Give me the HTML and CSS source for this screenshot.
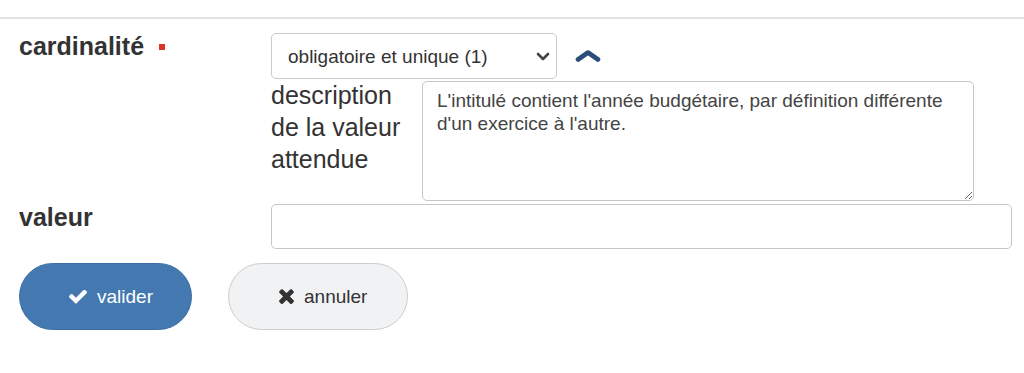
FILE: index.html
```html
<!DOCTYPE html>
<html lang="fr">
<head>
<meta charset="utf-8">
<title>cardinalité</title>
<link rel="stylesheet" href="styles.css">
</head>
<body>
<div class="topline"></div>
<form class="form">
  <div class="row">
    <div class="label">cardinalité<span class="required"></span></div>
    <div class="field">
      <div class="select-line">
        <div class="select-wrap">
          <select class="select">
            <option>obligatoire et unique (1)</option>
          </select>
          <svg class="select-arrow" width="14" height="9" viewBox="0 0 14 9"><polyline points="2,2 7,7 12,2" fill="none" stroke="#444" stroke-width="2.6" stroke-linecap="round" stroke-linejoin="round"/></svg>
        </div>
        <svg class="up" width="26" height="12" viewBox="0 0 26 12"><polyline points="3,9.5 13,2.5 23,9.5" fill="none" stroke="#2c4f77" stroke-width="4.6" stroke-linecap="round" stroke-linejoin="round"/></svg>
      </div>
      <div class="desc">
        <div class="desc-label">description de la valeur attendue</div>
        <textarea class="textarea">L'intitulé contient l'année budgétaire, par définition différente d'un exercice à l'autre.</textarea>
      </div>
    </div>
  </div>
  <div class="row row-valeur">
    <div class="label">valeur</div>
    <div class="field">
      <input class="input" type="text">
    </div>
  </div>
  <div class="buttons">
    <button type="button" class="btn btn-primary">
      <svg class="ico" width="18" height="14" viewBox="121 402 1550 1120"><path fill="#fff" d="M1671 566q0 40-28 68l-724 724-136 136q-28 28-68 28t-68-28l-136-136-362-362q-28-28-28-68t28-68l136-136q28-28 68-28t68 28l294 295 656-657q28-28 68-28t68 28l136 136q28 28 28 68z"/></svg>
      <span>valider</span>
    </button>
    <button type="button" class="btn btn-default">
      <svg class="ico" width="15" height="15" viewBox="110 360 1188 1194"><path fill="#333" d="M1298 1322q0 40-28 68l-136 136q-28 28-68 28t-68-28l-294-294-294 294q-28 28-68 28t-68-28l-136-136q-28-28-28-68t28-68l294-294-294-294q-28-28-28-68t28-68l136-136q28-28 68-28t68 28l294 294 294-294q28-28 68-28t68 28l136 136q28 28 28 68t-28 68l-294 294 294 294q28 28 28 68z"/></svg>
      <span>annuler</span>
    </button>
  </div>
</form>
</body>
</html>
```
FILE: styles.css
```css
* { box-sizing: border-box; }
html, body { margin: 0; background: #fff; }
body {
  font-family: "Liberation Sans", Arial, Helvetica, sans-serif;
  color: #333;
}
.topline {
  height: 19px;
  border-bottom: 2px solid #e2e2e2;
}
.form {
  padding: 14px 12px 0 19px;
}
.row {
  display: grid;
  grid-template-columns: 252px 1fr;
}
.label {
  font-size: 25px;
  font-weight: bold;
  line-height: 29px;
  margin-top: -1px;
}
.required {
  display: inline-block;
  width: 6px;
  height: 6px;
  background: #dd3322;
  margin-left: 15px;
  vertical-align: 5px;
}
.field { display: flex; flex-direction: column; }
.select-line {
  display: flex;
  align-items: center;
  height: 46px;
}
.select-wrap { position: relative; }
.select {
  appearance: none;
  -webkit-appearance: none;
  width: 286px;
  height: 46px;
  border: 1px solid #cbcbcb;
  border-radius: 5px;
  background: #fff;
  padding: 0 30px 0 16px;
  font-family: inherit;
  font-size: 19px;
  color: #333;
  margin: 0;
}
.select-arrow {
  position: absolute;
  right: 7px;
  top: 19px;
  pointer-events: none;
}
.up { margin-left: 18px; margin-top: 0; }
.desc {
  display: flex;
  margin-top: 2px;
}
.desc-label {
  width: 151px;
  font-size: 25px;
  line-height: 32px;
  margin-top: -2px;
}
.textarea {
  width: 552px;
  height: 120px;
  border: 1px solid #c6c6c6;
  border-radius: 5px;
  padding: 8px 14px;
  font-family: inherit;
  font-size: 19px;
  line-height: 22.5px;
  color: #444;
  margin: 0;
}
.row-valeur { margin-top: 3px; }
.input {
  width: 100%;
  height: 45px;
  border: 1px solid #c6c6c6;
  border-radius: 5px;
  margin: 0;
  font-family: inherit;
  font-size: 19px;
}
.buttons {
  display: flex;
  gap: 36px;
  margin-top: 14px;
}
.btn {
  display: flex;
  align-items: center;
  height: 67px;
  border-radius: 34px;
  font-family: inherit;
  font-size: 19px;
  padding: 0 0 0 49px;
  margin: 0;
  cursor: pointer;
}
.btn .ico { margin-right: 10px; flex: none; }
.btn-primary {
  width: 173px;
  background: #4379b0;
  border: 1px solid #3b6fa6;
  color: #fff;
}
.btn-default {
  width: 180px;
  background: #f1f2f4;
  border: 1.5px solid #cdcdcd;
  color: #333;
  padding-left: 50px;
}
```
